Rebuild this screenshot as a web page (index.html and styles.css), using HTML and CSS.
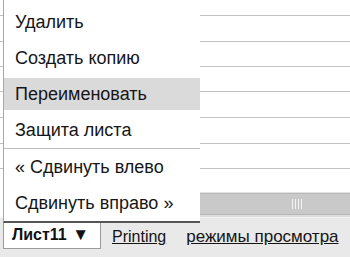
FILE: index.html
```html
<!DOCTYPE html>
<html lang="ru">
<head>
<meta charset="utf-8">
<link rel="stylesheet" href="styles.css">
</head>
<body>
<div class="app">
  <div class="sheet">
    <div class="row r1"></div>
    <div class="row r2"></div>
    <div class="row r3"></div>
    <div class="row r3"></div>
    <div class="row r2"></div>
    <div class="row r2"></div>
    <div class="row r3"></div>
  </div>
  <div class="hbar">
    <div class="hbar-left"></div>
    <div class="scroll"><span class="grip"></span></div>
  </div>
  <div class="tabs">
    <div class="tab">Лист11 <span class="arrow">▼</span></div>
    <a class="link link-print">Printing</a>
    <a class="link link-modes">режимы просмотра</a>
  </div>
  <div class="menu">
    <div class="item">Удалить</div>
    <div class="item">Создать копию</div>
    <div class="item active">Переименовать</div>
    <div class="item">Защита листа</div>
    <div class="sep"></div>
    <div class="item">« Сдвинуть влево</div>
    <div class="item">Сдвинуть вправо »</div>
  </div>
</div>
</body>
</html>
```
FILE: styles.css
```css
html, body {
  margin: 0;
  padding: 0;
  background: #fff;
}
.app {
  position: relative;
  width: 350px;
  height: 257px;
  overflow: hidden;
  font-family: "Liberation Sans", Arial, sans-serif;
  color: #141414;
  display: flex;
  flex-direction: column;
}
.sheet {
  height: 192px;
  display: flex;
  flex-direction: column;
  background: #fff;
}
.row {
  flex: none;
  border-bottom: 1px solid #c2c2c2;
}
.r1 { height: 15px; }
.r2 { height: 25px; }
.r3 { height: 24px; }
.hbar {
  height: 25px;
  display: flex;
}
.hbar-left {
  width: 199px;
  background: #fff;
}
.scroll {
  flex: 1;
  background: #c9c9c9;
  border-top: 1px solid #e2e2e2;
  border-bottom: 2px solid #dcdcdc;
  box-shadow: inset 0 1px 0 #b8b8b8, inset 0 -1px 0 #b5b5b5;
  display: flex;
  align-items: center;
  padding-left: 93px;
}
.grip {
  width: 12px;
  height: 10px;
  background: repeating-linear-gradient(to right, #f4f4f4 0 1px, #c9c9c9 1px 3px);
}
.tabs {
  flex: 1;
  background: #e9e9e9;
  border-top: 1px solid #f3f3f3;
  display: flex;
  align-items: flex-start;
  padding-left: 3px;
}
.tab {
  width: 88px;
  height: 27px;
  margin-top: 2px;
  background: #fff;
  border: 1px solid #9a9a9a;
  padding-left: 8px;
  font-weight: bold;
  font-size: 16px;
  line-height: 27px;
  color: #111;
  white-space: nowrap;
}
.arrow {
  font-size: 17px;
  margin-left: 1px;
}
.link {
  line-height: 18px;
  margin-top: 10px;
  text-decoration: underline;
  color: #141414;
  white-space: nowrap;
}
.link-print {
  font-size: 16px;
  margin-left: 11px;
}
.link-modes {
  font-size: 17px;
  margin-left: 20px;
}
.menu {
  position: absolute;
  left: 3px;
  top: 0;
  width: 196px;
  background: #fff;
  border-left: 1px solid #a8a8a8;
  border-bottom: 2px solid #555;
  padding-top: 4px;
  display: flex;
  flex-direction: column;
}
.item {
  height: 32px;
  margin: 2px 0;
  padding-left: 11px;
  font-size: 18px;
  line-height: 32px;
  color: #161616;
  white-space: nowrap;
}
.item.active {
  background: #dadada;
}
.sep {
  height: 1px;
  background: #bdbdbd;
}
```
